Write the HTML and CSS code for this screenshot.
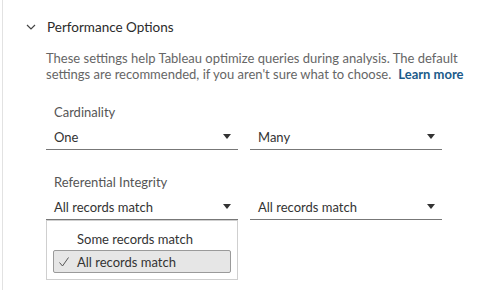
FILE: index.html
```html
<!DOCTYPE html>
<html lang="en">
<head>
    <meta charset="UTF-8">
    <meta name="viewport" content="width=device-width, initial-scale=1.0">
    <title>Performance Options</title>
    <link rel="stylesheet" href="styles.css">
</head>
<body>
    <div class="panel">
        <div class="section-header">
            <svg class="chevron" width="10" height="6" viewBox="0 0 10 6">
                <path d="M1 1 L5 5 L9 1" fill="none" stroke="#444" stroke-width="1.2"/>
            </svg>
            <span class="section-title">Performance Options</span>
        </div>

        <div class="section-body">
            <div class="description">
                <div class="description-line">These settings help Tableau optimize queries during analysis. The default</div>
                <div class="description-line">settings are recommended, if you aren't sure what to choose.<a class="learn-more" href="#">Learn more</a></div>
            </div>

            <div class="field">
                <div class="field-label">Cardinality</div>
                <div class="select-row">
                    <div class="select">
                        <span>One</span>
                        <svg class="caret" width="8" height="5" viewBox="0 0 8 5"><path d="M0 0 H8 L4 5 Z" fill="#333"/></svg>
                    </div>
                    <div class="select">
                        <span>Many</span>
                        <svg class="caret" width="8" height="5" viewBox="0 0 8 5"><path d="M0 0 H8 L4 5 Z" fill="#333"/></svg>
                    </div>
                </div>
            </div>

            <div class="field field-integrity">
                <div class="field-label">Referential Integrity</div>
                <div class="select-row">
                    <div class="select open">
                        <span>All records match</span>
                        <svg class="caret" width="8" height="5" viewBox="0 0 8 5"><path d="M0 0 H8 L4 5 Z" fill="#333"/></svg>
                        <ul class="menu">
                            <li class="menu-item"><span class="check"></span>Some records match</li>
                            <li class="menu-item selected">
                                <span class="check">
                                    <svg width="10" height="10" viewBox="0 0 10 10"><path d="M0.5 5.5 L3.5 9 L9.5 0.5" fill="none" stroke="#555" stroke-width="1"/></svg>
                                </span>All records match
                            </li>
                        </ul>
                    </div>
                    <div class="select">
                        <span>All records match</span>
                        <svg class="caret" width="8" height="5" viewBox="0 0 8 5"><path d="M0 0 H8 L4 5 Z" fill="#333"/></svg>
                    </div>
                </div>
            </div>
        </div>
    </div>
</body>
</html>
```

FILE: styles.css
```css
/* Performance options panel */
body {
    margin: 0;
    background-color: #fff;
    font-family: Lato, "Open Sans", sans-serif;
    color: #333;
    overflow: hidden;
}

.panel {
    margin-left: 2px;
    border-left: 1px solid #e2e2e2;
    height: 290px;
}

.section-header {
    display: flex;
    align-items: center;
    padding: 17px 0 0 23px;
    height: 20px;
}

.chevron {
    margin-right: 11px;
}

.section-title {
    font-size: 13.5px;
    line-height: 20px;
    color: #2b2b2b;
}

.section-body {
    padding-left: 43px;
}

.description {
    margin-top: 13px;
    font-size: 13px;
    line-height: 16px;
    color: #666;
    white-space: nowrap;
}

.learn-more {
    margin-left: 7px;
    font-weight: bold;
    color: #1b5b8a;
    text-decoration: none;
}

.field {
    margin-top: 22px;
}

.field-integrity {
    margin-top: 24px;
}

.field-label {
    padding-left: 8px;
    font-size: 13px;
    line-height: 16px;
    color: #555;
}

.select-row {
    display: flex;
    gap: 12px;
    margin-top: 3px;
}

.select {
    position: relative;
    display: flex;
    align-items: center;
    justify-content: space-between;
    width: 192px;
    box-sizing: border-box;
    padding: 4px 7px 2px 8px;
    border-bottom: 1px solid #777;
    font-size: 13px;
    line-height: 20px;
    color: #333;
}

.caret {
    margin-top: -2px;
}

.menu {
    position: absolute;
    top: 27px;
    left: 0;
    width: 192px;
    box-sizing: border-box;
    margin: 0;
    padding: 6px;
    list-style: none;
    background-color: #fff;
    border: 1px solid #cfcfcf;
}

.menu-item {
    display: flex;
    align-items: center;
    height: 23px;
    box-sizing: border-box;
    padding-left: 5px;
    border: 1px solid transparent;
    border-radius: 2px;
    font-size: 13px;
    color: #333;
}

.menu-item.selected {
    background-color: #e6e6e6;
    border-color: #9a9a9a;
}

.check {
    display: flex;
    align-items: center;
    width: 18px;
}
```
